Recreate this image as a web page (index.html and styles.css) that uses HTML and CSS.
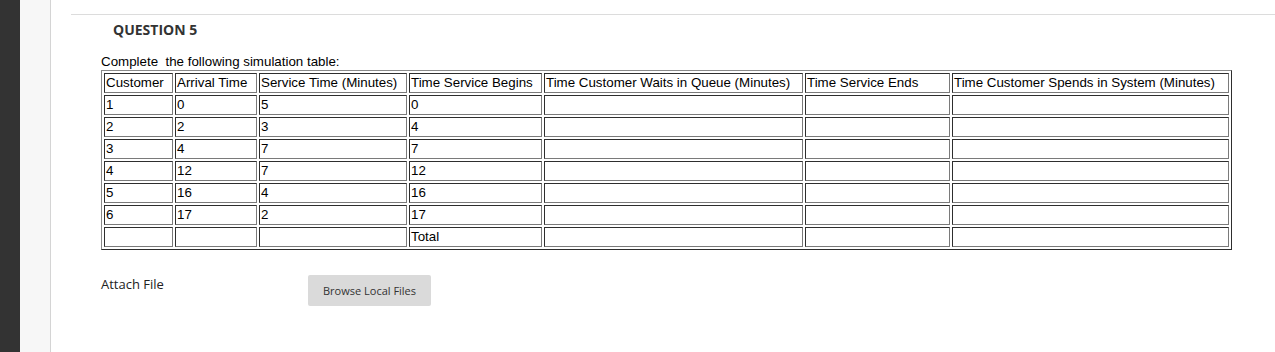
FILE: index.html
```html
<!DOCTYPE html>
<html lang="en">
<head>
  <meta charset="UTF-8" />
  <title>Question 5</title>
  <link rel="stylesheet" href="styles.css">
</head>
<body>
  <div class="sidebar"></div>
  <div class="rail"></div>

  <main class="main">
    <hr class="divider" />

    <h3 class="question-title">QUESTION 5</h3>

    <div class="question-body">
      <p class="intro">Complete&nbsp; the following simulation table:</p>

      <table class="sim-table">
        <thead>
          <tr>
            <th class="col-customer">Customer</th>
            <th class="col-arrival">Arrival Time</th>
            <th class="col-service">Service Time (Minutes)</th>
            <th class="col-begins">Time Service Begins</th>
            <th class="col-waits">Time Customer Waits in Queue (Minutes)</th>
            <th class="col-ends">Time Service Ends</th>
            <th class="col-spends">Time Customer Spends in System (Minutes)</th>
          </tr>
        </thead>
        <tbody>
          <tr><td>1</td><td>0</td><td>5</td><td>0</td><td></td><td></td><td></td></tr>
          <tr><td>2</td><td>2</td><td>3</td><td>4</td><td></td><td></td><td></td></tr>
          <tr><td>3</td><td>4</td><td>7</td><td>7</td><td></td><td></td><td></td></tr>
          <tr><td>4</td><td>12</td><td>7</td><td>12</td><td></td><td></td><td></td></tr>
          <tr><td>5</td><td>16</td><td>4</td><td>16</td><td></td><td></td><td></td></tr>
          <tr><td>6</td><td>17</td><td>2</td><td>17</td><td></td><td></td><td></td></tr>
          <tr><td></td><td></td><td></td><td>Total</td><td></td><td></td><td></td></tr>
        </tbody>
      </table>

      <div class="attach">
        <span class="attach-label">Attach File</span>
        <button class="browse-btn" type="button">Browse Local Files</button>
      </div>
    </div>
  </main>
</body>
</html>
```

FILE: styles.css
```css
* {
  box-sizing: border-box;
}

html,
body {
  height: 100%;
}

body {
  margin: 0;
  display: flex;
  background: #ffffff;
  font-family: "Open Sans", sans-serif;
  color: #333333;
  overflow: hidden;
}

.sidebar {
  width: 20px;
  flex: none;
  background: #333333;
}

.rail {
  width: 31px;
  flex: none;
  background: #f7f7f7;
  border-right: 1px solid #d4d4d4;
}

.main {
  flex: 1;
  padding-top: 14px;
}

.divider {
  margin: 0 0 0 20px;
  border: none;
  border-top: 1px solid #dcdcdc;
  height: 0;
}

.question-title {
  margin: 5px 0 0 62px;
  font-size: 14px;
  line-height: 20px;
  font-weight: 700;
  color: #333333;
}

.question-body {
  margin-left: 50px;
}

.intro {
  margin: 14px 0 0;
  font-family: "Liberation Sans", Arial, sans-serif;
  font-size: 10pt;
  line-height: 16px;
  color: #000000;
}

/* old-school bordered table: outset frame, inset cells */
.sim-table {
  width: 1131px;
  table-layout: fixed;
  border-collapse: separate;
  border-spacing: 2px;
  border: 1px solid;
  border-color: #8a8a8a #2e2e2e #2e2e2e #8a8a8a;
  font-family: "Liberation Sans", Arial, sans-serif;
  font-size: 10pt;
  color: #000000;
}

.sim-table th,
.sim-table td {
  height: 20px;
  padding: 1px;
  border: 1px solid;
  border-color: #2e2e2e #7a7a7a #7a7a7a #2e2e2e;
  text-align: left;
  font-weight: 400;
  line-height: 16px;
  white-space: nowrap;
  overflow: hidden;
}

.col-customer { width: 69px; }
.col-arrival { width: 82px; }
.col-service { width: 148px; }
.col-begins { width: 133px; }
.col-waits { width: 259px; }
.col-ends { width: 145px; }
.col-spends { width: 277px; }

.attach {
  display: flex;
  align-items: flex-start;
  margin-top: 25px;
}

.attach-label {
  width: 207px;
  font-size: 13px;
  line-height: 18px;
  color: #222222;
}

.browse-btn {
  height: 31px;
  padding: 0 15px;
  border: none;
  border-radius: 2px;
  background: #dadada;
  font-family: "Open Sans", sans-serif;
  font-size: 11px;
  color: #333333;
  cursor: pointer;
}
```
